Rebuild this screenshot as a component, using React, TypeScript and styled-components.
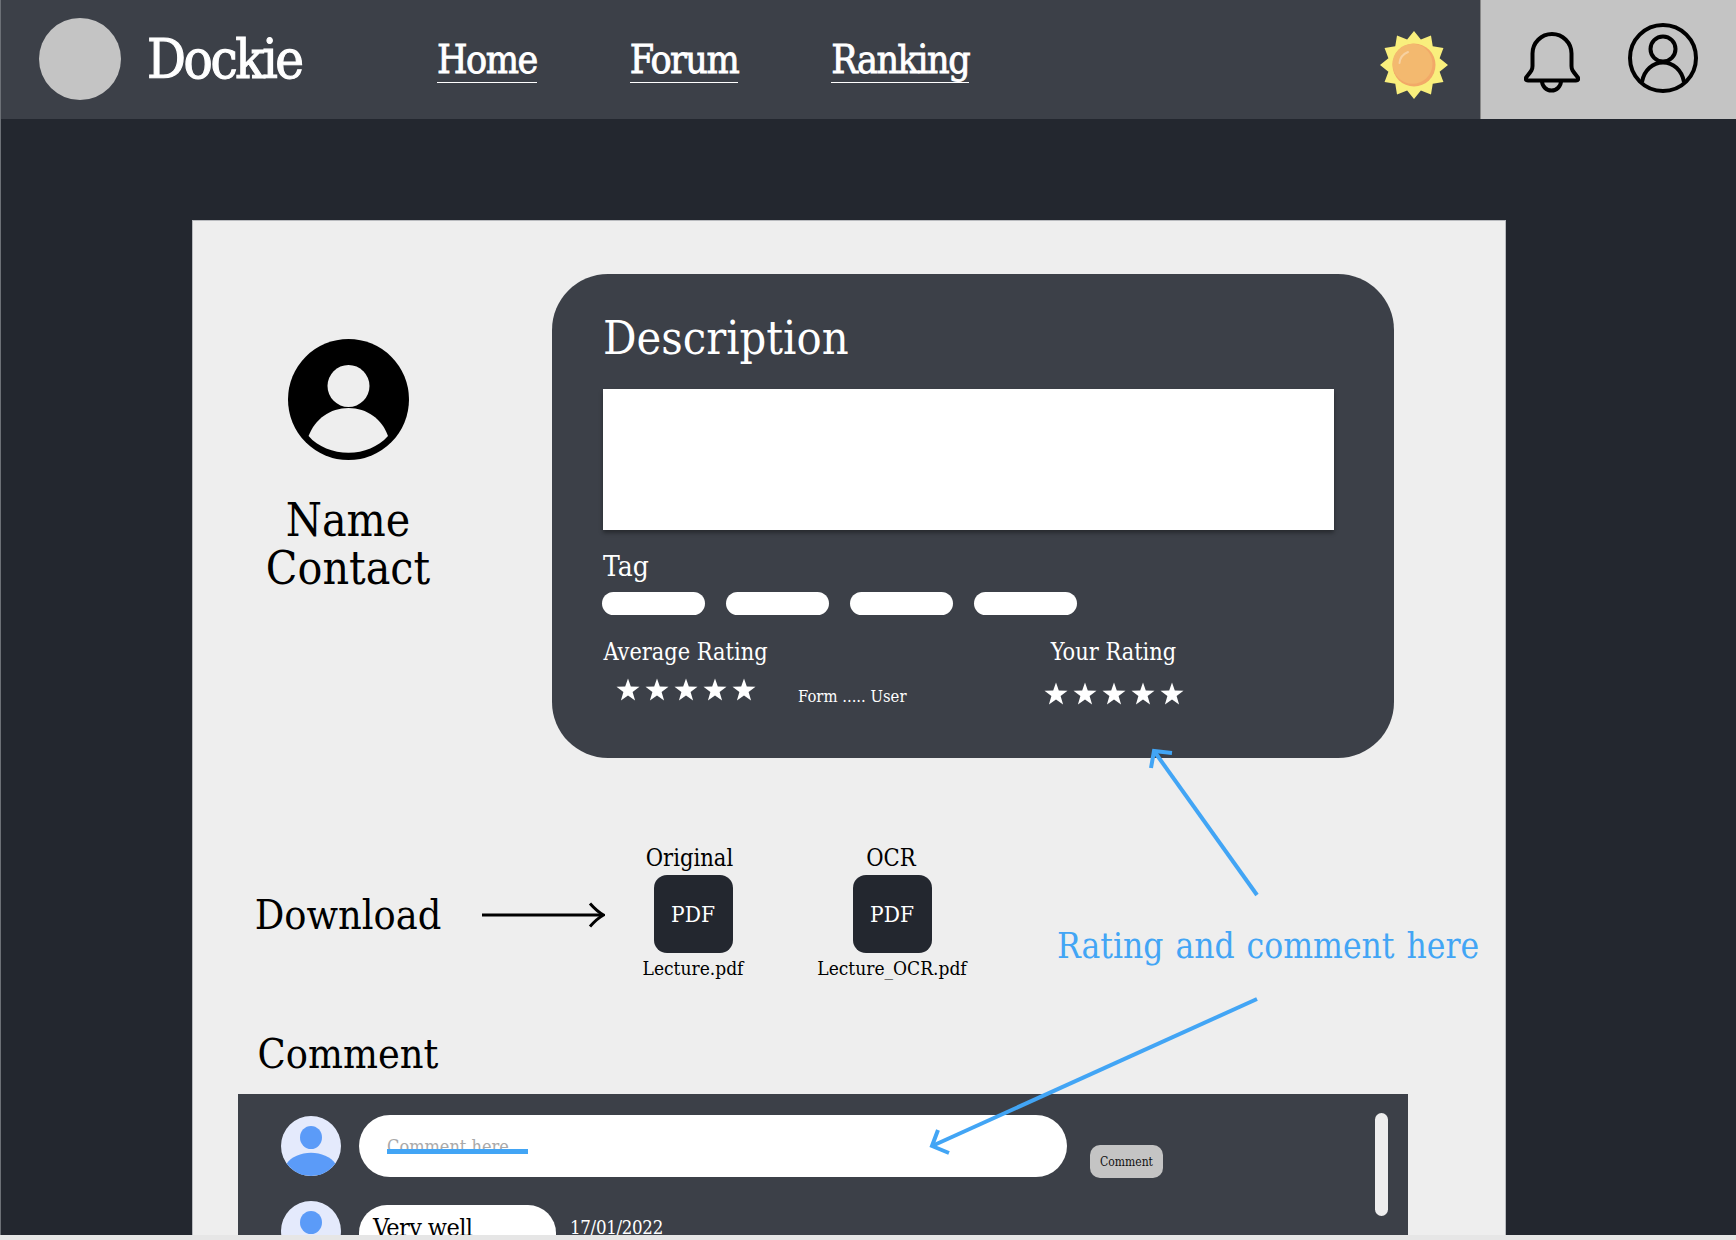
import React from "react";
import styled, { createGlobalStyle } from "styled-components";

const Global = createGlobalStyle`
  html, body { margin: 0; padding: 0; background: #e6e6e6; }
  body { font-family: "DejaVu Serif Condensed", "Liberation Serif", serif; }
`;

const BLUE = "#42a5f5";
const DARK = "#23272f";
const SLATE = "#3c4048";

const Viewport = styled.div`
  position: relative;
  width: 1736px;
  height: 1240px;
  overflow: hidden;
`;

const Stage = styled.div`
  height: 1235px;
  overflow: hidden;
  background: ${DARK};
  border-left: 1px solid #6c7076;
  box-sizing: border-box;
`;

const Header = styled.header`
  display: flex;
  align-items: center;
  height: 119px;
  margin-left: -1px;
  padding-left: 39px;
  background: ${SLATE};
`;

const LogoDot = styled.div`
  width: 82px;
  height: 82px;
  margin-bottom: 2px;
  border-radius: 50%;
  background: #c4c4c4;
`;

const Brand = styled.div`
  width: 155px;
  margin-left: 26px;
  color: #fff;
  font-size: 54px;
  letter-spacing: -2.4px;
  -webkit-text-stroke: 1.1px #fff;
  white-space: nowrap;
`;

const Nav = styled.nav`
  display: flex;
  gap: 93px;
  margin-left: 135px;
`;

const NavLink = styled.a`
  display: block;
  height: 43px;
  margin-top: 3px;
  border-bottom: 1px solid #fff;
  color: #fff;
  font-size: 39px;
  line-height: 42px;
  letter-spacing: -1.5px;
  -webkit-text-stroke: 0.8px #fff;
  white-space: nowrap;
`;

const SunSlot = styled.div`
  display: flex;
  margin: 10px 32px 0 auto;
`;

const IconTray = styled.div`
  display: flex;
  align-items: flex-start;
  width: 256px;
  height: 119px;
  padding: 23px 0 0 43px;
  gap: 48px;
  background: #c4c4c4;
  box-sizing: border-box;
  border-left: 1px solid #888;
`;

const BellSlot = styled.div`
  display: flex;
  margin-top: 9px;
`;

const Card = styled.main`
  box-sizing: border-box;
  width: 1314px;
  height: 1015px;
  margin: 101px 0 0 191px;
  padding: 53px 0 0 45px;
  background: #eee;
  border: 1px solid #b9bbbf;
  border-bottom: 0;
`;

const TopRow = styled.section`
  display: flex;
  align-items: flex-start;
`;

const Side = styled.div`
  flex: 0 0 220px;
  display: flex;
  flex-direction: column;
  align-items: center;
  text-align: center;
`;

const ProfileSide = styled(Side)`
  padding-top: 65px;
`;

const PersonText = styled.div`
  margin-top: 36px;
  color: #000;
  font-size: 46px;
  line-height: 48px;
`;

const Panel = styled.section`
  box-sizing: border-box;
  width: 842px;
  height: 484px;
  margin-left: 94px;
  padding: 34px 60px 0 51px;
  border-radius: 56px;
  background: ${SLATE};
  color: #fff;
`;

const PanelTitle = styled.h2`
  margin: 0 0 21px;
  font-size: 46.5px;
  font-weight: 400;
  line-height: 60px;
`;

const DescBox = styled.div`
  height: 141px;
  background: #fff;
  box-shadow: 0 3px 4px rgba(0, 0, 0, 0.35);
`;

const TagLabel = styled.div`
  margin-top: 20px;
  font-size: 28px;
  line-height: 34px;
`;

const TagRow = styled.div`
  display: flex;
  gap: 21px;
  margin: 8px 0 0 -1px;
`;

const TagPill = styled.span`
  width: 103px;
  height: 23px;
  border-radius: 12px;
  background: #fff;
`;

const RatingRow = styled.div`
  display: flex;
  align-items: flex-start;
  margin-top: 22px;
`;

const RatingCol = styled.div<{ $width: number; $left?: number; $drop: number }>`
  display: flex;
  flex-direction: column;
  align-items: center;
  width: ${(p) => p.$width}px;
  margin-left: ${(p) => p.$left ?? 0}px;
  row-gap: ${(p) => p.$drop}px;
`;

const RatingLabel = styled.div`
  font-size: 23.3px;
  line-height: 30px;
  white-space: nowrap;
`;

const Stars = styled.div`
  display: flex;
  gap: 5px;
`;

const FormNote = styled.div`
  width: 109px;
  margin: 47px 0 0 30px;
  font-size: 16.5px;
  line-height: 26px;
  white-space: nowrap;
`;

const DownloadRow = styled.section`
  display: flex;
  align-items: center;
  margin-top: 87px;
  height: 140px;
`;

const BigLabel = styled.div`
  color: #000;
  font-size: 41px;
  line-height: 44px;
`;

const ArrowSlot = styled.div`
  display: flex;
  margin: 0 8px 0 24px;
`;

const Files = styled.div`
  display: flex;
  gap: 39px;
  margin-top: -3px;
`;

const FileItem = styled.div`
  display: flex;
  flex-direction: column;
  align-items: center;
  width: 160px;
`;

const FileKind = styled.div<{ $shift: number }>`
  height: 29px;
  margin-right: ${(p) => p.$shift}px;
  color: #000;
  font-size: 23.5px;
  line-height: 25px;
`;

const PdfTile = styled.div`
  display: flex;
  align-items: center;
  justify-content: center;
  width: 79px;
  height: 78px;
  border-radius: 13px;
  background: ${DARK};
  color: #fff;
  font-size: 22.5px;
`;

const FileName = styled.div`
  margin-top: 2px;
  color: #000;
  font-size: 19px;
  line-height: 26px;
  white-space: nowrap;
`;

const CommentHead = styled(Side)`
  width: 220px;
  margin-top: 47px;
  margin-bottom: 18px;
`;

const CommentPanel = styled.section`
  position: relative;
  width: 1170px;
  height: 142px;
  overflow: hidden;
  padding: 21px 0 0 43px;
  box-sizing: border-box;
  background: ${SLATE};
`;

const CommentRow = styled.div`
  display: flex;
  align-items: flex-start;
  margin-bottom: 22px;
`;

const AvatarSlot = styled.div`
  display: flex;
  flex: 0 0 60px;
  margin: 1px 18px 0 0;
`;

const CommentInput = styled.div`
  box-sizing: border-box;
  width: 708px;
  height: 62px;
  padding: 17px 28px 0;
  border-radius: 31px;
  background: #fff;
  color: #a9a9a9;
  font-size: 18px;
  line-height: 30px;
`;

const SendButton = styled.button`
  width: 73px;
  height: 33px;
  margin: 30px 0 0 23px;
  padding: 0;
  border: 0;
  border-radius: 10px;
  background: #c4c4c4;
  color: #111;
  font-family: inherit;
  font-size: 12px;
`;

const Bubble = styled.div`
  box-sizing: border-box;
  width: 197px;
  height: 60px;
  margin-top: 5px;
  padding: 7px 14px 0;
  border-radius: 28px;
  background: #fff;
  color: #000;
  font-size: 25px;
  letter-spacing: -0.6px;
  line-height: 32px;
`;

const PostDate = styled.div`
  margin: 15px 0 0 14px;
  color: #fff;
  font-size: 18.5px;
  letter-spacing: -0.3px;
  line-height: 26px;
`;

const ScrollThumb = styled.div`
  position: absolute;
  top: 19px;
  right: 20px;
  width: 13px;
  height: 103px;
  border-radius: 7px;
  background: #eee;
`;

const Strip = styled.div`
  height: 5px;
  background: #e6e6e6;
`;

const AnnotationLayer = styled.svg`
  position: absolute;
  inset: 0;
  pointer-events: none;
`;

const AnnotationText = styled.div`
  position: absolute;
  left: 1057px;
  top: 920px;
  color: ${BLUE};
  font-size: 35px;
  word-spacing: 2px;
  line-height: 52px;
  white-space: nowrap;
`;

const sunPoints = Array.from({ length: 24 }, (_, i) => {
  const r = i % 2 === 0 ? 34 : 26.5;
  const a = (i * Math.PI) / 12 - Math.PI / 2;
  return `${(34 + r * Math.cos(a)).toFixed(2)},${(34 + r * Math.sin(a)).toFixed(2)}`;
}).join(" ");

const Sun = () => (
  <svg width="68" height="68" viewBox="0 0 68 68">
    <polygon points={sunPoints} fill="#f9ef7d" />
    <circle cx="34" cy="34" r="21.5" fill="#f2a968" />
    <circle cx="32.5" cy="32.8" r="20" fill="#f3b96f" />
    <path d="M19.5 32c.5-5 3.5-9 8.5-11" fill="none" stroke="#fff" strokeOpacity=".35" strokeWidth="2" strokeLinecap="round" />
  </svg>
);

const Bell = () => (
  <svg width="56" height="62" viewBox="0 0 56 62" fill="none" stroke="#000" strokeWidth="4" strokeLinejoin="round">
    <path d="M8.5 21.5a19.5 19.5 0 0 1 39 0V34c0 4 1.5 5.5 6 11 1.5 2 .5 3.5-1.5 3.5H4c-2 0-3-1.5-1.5-3.5C7 39.5 8.5 38 8.5 34Z" />
    <path d="M18 49a9.5 9.5 0 0 0 19 0" />
  </svg>
);

const UserRing = () => (
  <svg width="70" height="70" viewBox="0 0 70 70" fill="none" stroke="#000" strokeWidth="4">
    <circle cx="35" cy="35" r="33" />
    <circle cx="35" cy="26" r="12.5" />
    <path d="M14 59C16 47 25 39.5 35 39.5S54 47 56 59" />
  </svg>
);

const ProfileIcon = () => (
  <svg width="121" height="121" viewBox="0 0 121 121">
    <circle cx="60.5" cy="60.5" r="60.5" fill="#000" />
    <circle cx="60.5" cy="47" r="21" fill="#eee" />
    <path d="M20.6 97C27 80 42 69 60.5 69S94 80 100 97C90 108 76 113.7 60.5 113.7S30 108 20.6 97Z" fill="#eee" />
  </svg>
);

const CommentAvatar = () => (
  <svg width="60" height="60" viewBox="0 0 60 60">
    <circle cx="30" cy="30" r="30" fill="#e4eafc" />
    <ellipse cx="30" cy="21.5" rx="11" ry="11.5" fill="#5b9bf8" />
    <path d="M5.7 47.5C10 41 20 36.7 30 36.7S50 41 54.3 47.5A30 30 0 0 1 5.7 47.5Z" fill="#5b9bf8" />
  </svg>
);

const Star = () => (
  <svg width="24" height="24" viewBox="0 0 24 24">
    <polygon points="12,0.5 14.8,8.6 23.5,8.8 16.6,14 19.1,22.5 12,17.5 4.9,22.5 7.4,14 0.5,8.8 9.2,8.6" fill="#fff" />
  </svg>
);

const FiveStars = () => (
  <Stars>
    {[0, 1, 2, 3, 4].map((n) => (
      <Star key={n} />
    ))}
  </Stars>
);

const files = [
  { kind: "Original", name: "Lecture.pdf", shift: 7 },
  { kind: "OCR", name: "Lecture_OCR.pdf", shift: 2 },
];

export default function App() {
  return (
    <Viewport>
      <Global />
      <Stage>
        <Header>
          <LogoDot />
          <Brand>Dockie</Brand>
          <Nav>
            <NavLink>Home</NavLink>
            <NavLink>Forum</NavLink>
            <NavLink>Ranking</NavLink>
          </Nav>
          <SunSlot>
            <Sun />
          </SunSlot>
          <IconTray>
            <BellSlot>
              <Bell />
            </BellSlot>
            <UserRing />
          </IconTray>
        </Header>
        <Card>
          <TopRow>
            <ProfileSide>
              <ProfileIcon />
              <PersonText>
                Name
                <br />
                Contact
              </PersonText>
            </ProfileSide>
            <Panel>
              <PanelTitle>Description</PanelTitle>
              <DescBox />
              <TagLabel>Tag</TagLabel>
              <TagRow>
                <TagPill />
                <TagPill />
                <TagPill />
                <TagPill />
              </TagRow>
              <RatingRow>
                <RatingCol $width={165} $drop={11}>
                  <RatingLabel>Average Rating</RatingLabel>
                  <FiveStars />
                </RatingCol>
                <FormNote>Form ..... User</FormNote>
                <RatingCol $width={141} $left={136} $drop={15}>
                  <RatingLabel>Your Rating</RatingLabel>
                  <FiveStars />
                </RatingCol>
              </RatingRow>
            </Panel>
          </TopRow>
          <DownloadRow>
            <Side>
              <BigLabel>Download</BigLabel>
            </Side>
            <ArrowSlot>
              <svg width="123" height="26" viewBox="0 0 123 26" fill="none" stroke="#000" strokeWidth="3">
                <path d="M0 13H121" />
                <path d="M108 1.5C112 6 116 10 121.5 13C116 16 112 20 108 24.5" />
              </svg>
            </ArrowSlot>
            <Files>
              {files.map((f) => (
                <FileItem key={f.name}>
                  <FileKind $shift={f.shift}>{f.kind}</FileKind>
                  <PdfTile>PDF</PdfTile>
                  <FileName>{f.name}</FileName>
                </FileItem>
              ))}
            </Files>
          </DownloadRow>
          <CommentHead>
            <BigLabel>Comment</BigLabel>
          </CommentHead>
          <CommentPanel>
            <CommentRow>
              <AvatarSlot>
                <CommentAvatar />
              </AvatarSlot>
              <CommentInput>Comment here</CommentInput>
              <SendButton>Comment</SendButton>
            </CommentRow>
            <CommentRow>
              <AvatarSlot>
                <CommentAvatar />
              </AvatarSlot>
              <Bubble>Very well</Bubble>
              <PostDate>17/01/2022</PostDate>
            </CommentRow>
            <ScrollThumb />
          </CommentPanel>
        </Card>
      </Stage>
      <Strip />
      <AnnotationLayer width="1736" height="1240" viewBox="0 0 1736 1240" fill="none" stroke={BLUE}>
        <path d="M387 1151.5H528" strokeWidth="5" />
        <path d="M1257 895L1154 751" strokeWidth="4" />
        <path d="M1151 768L1154 751L1172 753" strokeWidth="4" />
        <path d="M1257 999L932 1146" strokeWidth="4" />
        <path d="M938 1130L932 1146L949 1153" strokeWidth="4" />
      </AnnotationLayer>
      <AnnotationText>Rating and comment here</AnnotationText>
    </Viewport>
  );
}
